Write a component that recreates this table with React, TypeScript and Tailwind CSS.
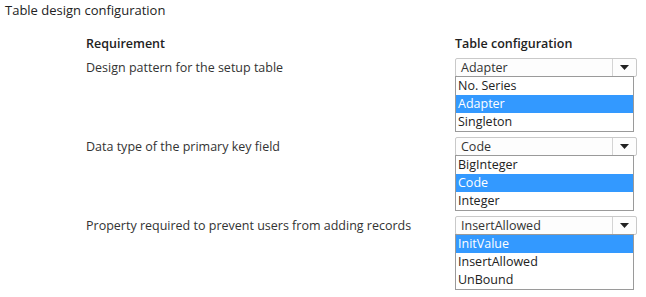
const groups = [
  {
    label: 'Design pattern for the setup table',
    value: 'Adapter',
    options: ['No. Series', 'Adapter', 'Singleton'],
  },
  {
    label: 'Data type of the primary key field',
    value: 'Code',
    options: ['BigInteger', 'Code', 'Integer'],
  },
  {
    label: 'Property required to prevent users from adding records',
    value: 'InsertAllowed',
    options: ['InitValue', 'InsertAllowed', 'UnBound'],
    selected: 'InitValue',
  },
];

function Dropdown({ value, options, selected }: { value: string; options: string[]; selected?: string }) {
  const active = selected ?? value;
  return (
    <div className="w-[182px]">
      <div className="flex h-[19px] items-stretch rounded-[2px] border border-[#c9c9c9] bg-[#fdfdfd]">
        <div className="flex-1 pl-[5px] leading-[17px] text-[#333]">{value}</div>
        <div className="flex w-[24px] items-center justify-center border-l border-[#d4d4d4]">
          <svg width="9" height="5" viewBox="0 0 9 5">
            <path d="M0 0h9L4.5 5z" fill="#222" />
          </svg>
        </div>
      </div>
      <div className="-mt-px w-[179px] border border-[#9a9a9a] bg-white">
        {options.map((o) => (
          <div
            key={o}
            className={
              o === active
                ? 'h-[18px] bg-[#3399ff] pl-[2px] leading-[18px] text-white'
                : 'h-[18px] pl-[2px] leading-[18px] text-[#222]'
            }
          >
            {o}
          </div>
        ))}
      </div>
    </div>
  );
}

export default function App() {
  return (
    <div className="h-[297px] w-[646px] overflow-hidden bg-white text-[12.5px] text-[#333]" style={{ fontFamily: '"Open Sans", sans-serif' }}>
      <div className="pl-[5px] pt-[1px] text-[13px] leading-[18px] text-[#222]">Table design configuration</div>
      <div className="mt-[16px] grid grid-cols-[369px_182px] pl-[86px]">
        <div className="font-semibold text-[#222]">Requirement</div>
        <div className="font-semibold text-[#222]">Table configuration</div>
      </div>
      <div className="mt-[4px] flex flex-col gap-[5px]">
        {groups.map((g) => (
          <div key={g.label} className="grid grid-cols-[369px_182px] pl-[86px]">
            <div className="leading-[19px]">{g.label}</div>
            <Dropdown value={g.value} options={g.options} selected={g.selected} />
          </div>
        ))}
      </div>
    </div>
  );
}
